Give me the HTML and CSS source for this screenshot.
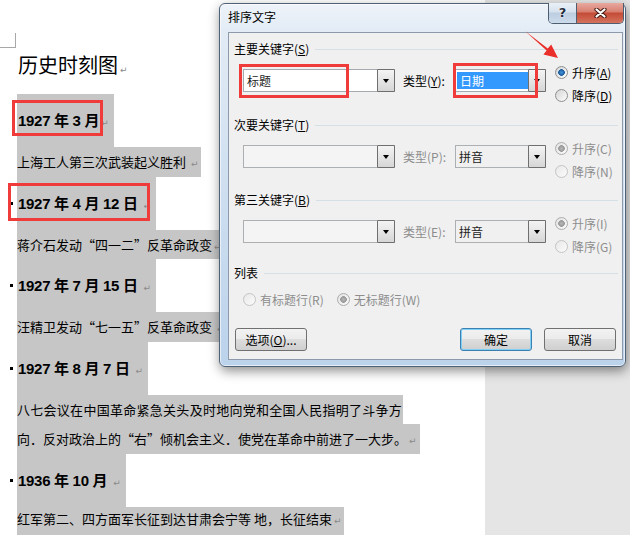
FILE: index.html
```html
<!DOCTYPE html>
<html lang="zh-CN">
<head>
    <meta charset="UTF-8">
    <title>排序文字</title>
    <link rel="stylesheet" href="styles.css">
</head>
<body>
    <div class="doc">
        <div class="crop"></div>
        <h1 class="doc-title">历史时刻图<span class="pm">↵</span></h1>

        <div class="entry"><span class="dot dot-hidden"></span><span class="date">1927 年 3 月<span class="pm">↵</span></span></div>
        <p class="event">上海工人第三次武装起义胜利 <span class="pm">↵</span></p>

        <div class="entry"><span class="dot"></span><span class="date">1927 年 4 月 12 日 <span class="pm">↵</span></span></div>
        <p class="event">蒋介石发动“四一二”反革命政变<span class="pm">↵</span></p>

        <div class="entry"><span class="dot"></span><span class="date">1927 年 7 月 15 日 <span class="pm">↵</span></span></div>
        <p class="event">汪精卫发动“七一五”反革命政变 <span class="pm">↵</span></p>

        <div class="entry"><span class="dot"></span><span class="date">1927 年 8 月 7 日 <span class="pm">↵</span></span></div>
        <div class="event-long">
            <span class="line line-wide">八七会议在中国革命紧急关头及时地向党和全国人民指明了斗争方</span>
            <span class="line">向．反对政治上的“右”倾机会主义．使党在革命中前进了一大步。<span class="pm">↵</span></span>
        </div>

        <div class="entry"><span class="dot"></span><span class="date">1936 年 10 月 <span class="pm">↵</span></span></div>
        <p class="event event-last">红军第二、四方面军长征到达甘肃会宁等 地，长征结束<span class="pm">↵</span></p>
    </div>
    <div class="side"></div>

    <div class="dialog">
        <div class="titlebar">
            <span class="title">排序文字</span>
            <div class="caps">
                <span class="cap-help">?</span>
                <span class="cap-close">
                    <svg width="13" height="10" viewBox="0 0 13 10">
                        <path d="M2.5 1.5 L10.5 8.5 M10.5 1.5 L2.5 8.5" stroke="#4a1c14" stroke-width="4.2" stroke-linecap="round"/>
                        <path d="M2.5 1.5 L10.5 8.5 M10.5 1.5 L2.5 8.5" stroke="#fff" stroke-width="2.2" stroke-linecap="round"/>
                    </svg>
                </span>
            </div>
        </div>

        <div class="client">
            <div class="group">
                <div class="group-head">主要关键字(<u>S</u>)</div>
                <div class="key-row">
                    <div class="key-fields">
                        <div class="combo combo-key"><span class="combo-text">标题</span><span class="drop"><i></i></span></div>
                        <span class="type-label">类型(<u>Y</u>):</span>
                        <div class="combo combo-type"><span class="combo-text picked">日期</span><span class="drop"><i></i></span></div>
                    </div>
                    <div class="sort-order">
                        <label class="radio on"><span class="radio-box"></span>升序(<u>A</u>)</label>
                        <label class="radio"><span class="radio-box"></span>降序(<u>D</u>)</label>
                    </div>
                </div>
            </div>

            <div class="group group-2">
                <div class="group-head">次要关键字(<u>T</u>)</div>
                <div class="key-row">
                    <div class="key-fields">
                        <div class="combo combo-key off"><span class="combo-text"></span><span class="drop"><i></i></span></div>
                        <span class="type-label off">类型(P):</span>
                        <div class="combo combo-type off"><span class="combo-text">拼音</span><span class="drop"><i></i></span></div>
                    </div>
                    <div class="sort-order">
                        <label class="radio off on"><span class="radio-box"></span>升序(C)</label>
                        <label class="radio off"><span class="radio-box"></span>降序(N)</label>
                    </div>
                </div>
            </div>

            <div class="group group-3">
                <div class="group-head">第三关键字(<u>B</u>)</div>
                <div class="key-row">
                    <div class="key-fields">
                        <div class="combo combo-key off"><span class="combo-text"></span><span class="drop"><i></i></span></div>
                        <span class="type-label off">类型(E):</span>
                        <div class="combo combo-type off"><span class="combo-text">拼音</span><span class="drop"><i></i></span></div>
                    </div>
                    <div class="sort-order">
                        <label class="radio off on"><span class="radio-box"></span>升序(I)</label>
                        <label class="radio off"><span class="radio-box"></span>降序(G)</label>
                    </div>
                </div>
            </div>

            <div class="group-head">列表</div>
            <div class="list-row">
                <label class="radio off"><span class="radio-box"></span>有标题行(R)</label>
                <label class="radio off on"><span class="radio-box"></span>无标题行(W)</label>
            </div>

            <div class="btn-row">
                <button class="btn">选项(<u>O</u>)...</button>
                <span class="btn-space"></span>
                <button class="btn btn-default">确定</button>
                <button class="btn">取消</button>
            </div>
        </div>
    </div>

    <div class="hl hl-1"></div>
    <div class="hl hl-2"></div>
    <div class="hl hl-3"></div>
    <div class="hl hl-4"></div>
    <svg class="arrow" width="45" height="36" viewBox="0 0 45 36">
        <polygon points="5,3 27.8,20.6 31.2,16.4 38,30 23.4,26.6 26.6,22.4" fill="#ea2f2b"/>
    </svg>
</body>
</html>
```

FILE: styles.css
```css
body {
    margin: 0;
    width: 630px;
    height: 535px;
    overflow: hidden;
    display: flex;
    position: relative;
    background-color: #fff;
    color: #000;
    font-family: "Noto Sans CJK SC", sans-serif;
}

/* document page */
.doc {
    width: 485px;
    padding: 33px 0 0 10px;
    box-sizing: border-box;
}

.side {
    flex: 1;
    background-color: #e5e5e5;
}

.crop {
    width: 16px;
    height: 15px;
    margin-left: -10px;
    border-right: 1px solid #a8a8a8;
    border-bottom: 1px solid #a8a8a8;
    box-sizing: border-box;
}

.doc-title {
    margin: 2px 0 14px 8px;
    height: 30px;
    font-size: 20px;
    font-weight: normal;
    line-height: 30px;
}

.pm {
    margin-left: 2px;
    font-family: "DejaVu Sans", sans-serif;
    font-size: 9px;
    font-weight: normal;
    line-height: 0;
    color: #8a8a8a;
    letter-spacing: 0;
}

.entry {
    display: flex;
    align-items: center;
    height: 53px;
}

.dot {
    width: 3px;
    height: 3px;
    margin-right: 4px;
    background-color: #000;
}

.dot-hidden {
    visibility: hidden;
}

.date {
    height: 53px;
    padding: 0 5px 0 1px;
    background-color: #c6c6c6;
    font-family: "Liberation Sans", "Noto Sans CJK SC", sans-serif;
    font-size: 15px;
    font-weight: bold;
    line-height: 53px;
    letter-spacing: -0.3px;
}

.event {
    width: fit-content;
    height: 29.5px;
    margin: 0 0 0 7px;
    padding-right: 3px;
    background-color: #c6c6c6;
    font-size: 13px;
    line-height: 29.5px;
    overflow: hidden;
}

.event-last {
    height: 32px;
    line-height: 23px;
}

.event-long {
    margin-left: 7px;
    font-size: 13px;
    line-height: 29.5px;
}

.line {
    display: block;
    width: fit-content;
    height: 29.5px;
    padding-right: 3px;
    background-color: #c6c6c6;
    overflow: hidden;
}

.line-wide {
    padding-right: 1px;
    letter-spacing: 0.28px;
}

/* sort dialog */
.dialog {
    position: absolute;
    left: 219px;
    top: 3px;
    width: 407px;
    height: 364px;
    padding: 0 2px 6px 8px;
    box-sizing: border-box;
    display: flex;
    flex-direction: column;
    border: 1px solid #4f6175;
    border-radius: 6px;
    background: linear-gradient(to bottom, #eef3f9 0, #e2ebf5 28px, #cadcef 60%, #bcd3ec 100%);
    box-shadow: 1px 4px 12px rgba(0, 0, 0, 0.45), inset 0 0 0 1px rgba(255, 255, 255, 0.6);
    font-size: 12px;
}

.titlebar {
    height: 28px;
    display: flex;
    justify-content: space-between;
    align-items: flex-start;
}

.title {
    line-height: 26px;
}

.caps {
    display: flex;
    height: 20px;
    margin: -1px -1px 0 0;
    border: 1px solid #4e5e70;
    border-top: none;
    border-radius: 0 0 5px 5px;
    overflow: hidden;
}

.cap-help {
    width: 27px;
    border-right: 1px solid #4e5e70;
    background: linear-gradient(to bottom, #eaf0f7 0, #d6e1ee 45%, #bccde1 50%, #cddbeb 100%);
    color: #1f2d3d;
    font-family: "DejaVu Sans", sans-serif;
    font-size: 13px;
    font-weight: bold;
    line-height: 19px;
    text-align: center;
    text-shadow: 0 0 2px #fff, 0 0 1px #fff;
}

.cap-close {
    width: 46px;
    display: flex;
    align-items: center;
    justify-content: center;
    background: linear-gradient(to bottom, #e8a99f 0, #d77f6f 45%, #c44b35 50%, #d3735f 100%);
}

.client {
    flex: 1;
    padding: 6px 4px 0 5px;
    border: 1px solid #8d9aab;
    background-color: #f0f0f0;
}

.group {
    height: 76px;
}

.group-2 {
    height: 75px;
}

.group-3 {
    height: 73px;
}

.group-head {
    display: flex;
    align-items: center;
    height: 20px;
    line-height: 20px;
}

.group-head::after {
    content: "";
    flex: 1;
    height: 1px;
    margin-left: 6px;
    background-color: #d5dfe6;
}

.key-row {
    display: flex;
    align-items: flex-start;
    margin-top: 2px;
}

.key-fields {
    display: flex;
    align-items: center;
    margin: 8px 0 0 9px;
}

.combo {
    display: flex;
    height: 23px;
    border: 1px solid #a5a9b0;
    background-color: #fff;
    box-sizing: border-box;
}

.combo.off {
    border-color: #adb0b3;
    background-color: #f4f4f4;
}

.combo-type.off {
    background-color: #f0f0f0;
}

.combo-key {
    width: 152px;
}

.combo-type {
    width: 91px;
}

.combo-text {
    flex: 1;
    padding-left: 3px;
    line-height: 21px;
    color: #222;
}

.combo-text.picked {
    margin: 2px 0 2px 1px;
    padding-left: 3px;
    background-color: #3399ff;
    color: #fff;
    line-height: 17px;
}

.drop {
    width: 16px;
    margin: -1px -1px -1px 0;
    display: flex;
    align-items: center;
    justify-content: center;
    border: 1px solid #6f6f6f;
    border-radius: 1px;
    background: linear-gradient(to bottom, #f4f4f4, #d6d6d6);
}

.drop i {
    width: 0;
    height: 0;
    border-left: 3.5px solid transparent;
    border-right: 3.5px solid transparent;
    border-top: 4px solid #000;
}

.type-label {
    width: 52px;
    margin-left: 8px;
    line-height: 23px;
}

.type-label.off,
.radio.off {
    color: #8d8d8d;
}

.sort-order {
    margin-left: 9px;
}

.radio {
    display: flex;
    align-items: center;
    height: 23px;
}

.radio-box {
    width: 13px;
    height: 13px;
    margin-right: 4px;
    flex: none;
    box-sizing: border-box;
    border: 1px solid #8e8f8f;
    border-radius: 50%;
    background: linear-gradient(135deg, #d4d4d4, #fdfdfd);
}

.radio.on .radio-box {
    background: radial-gradient(circle, #4596dc 0, #1a5a9c 3px, transparent 3.6px), linear-gradient(135deg, #d4d4d4, #fdfdfd);
}

.radio.off .radio-box {
    border-color: #c4c4c4;
    background: linear-gradient(135deg, #e8e8e8, #fbfbfb);
}

.radio.off.on .radio-box {
    border-color: #acacac;
    background: radial-gradient(circle, #b8b8b8 0, #979797 3px, transparent 3.6px), linear-gradient(135deg, #e2e2e2, #fbfbfb);
}

.list-row {
    display: flex;
    gap: 13px;
    height: 20px;
    margin: 6px 0 0 9px;
}

.list-row .radio {
    height: 20px;
}

.btn-row {
    display: flex;
    margin: 19px 2px 0 1px;
}

.btn-space {
    flex: 1;
}

.btn {
    width: 72px;
    height: 23px;
    margin: 0;
    padding: 0;
    border: 1px solid #707070;
    border-radius: 3px;
    background: linear-gradient(to bottom, #f2f2f2 0%, #ebebeb 50%, #dddddd 50%, #cfcfcf 100%);
    font-family: "Noto Sans CJK SC", sans-serif;
    font-size: 12px;
    color: #000;
    line-height: 21px;
}

.btn-default {
    margin-right: 12px;
    border-color: #3c7fb1;
    box-shadow: inset 0 0 0 1px #7fd0f5;
}

/* annotations */
.hl {
    position: absolute;
    border: 3px solid #f03b3b;
    box-sizing: border-box;
}

.hl-1 {
    left: 12px;
    top: 100px;
    width: 91px;
    height: 36px;
}

.hl-2 {
    left: 8px;
    top: 183px;
    width: 142px;
    height: 38px;
}

.hl-3 {
    left: 239px;
    top: 64px;
    width: 110px;
    height: 34px;
}

.hl-4 {
    left: 453px;
    top: 63px;
    width: 85px;
    height: 35px;
}

.arrow {
    position: absolute;
    left: 520px;
    top: 28px;
}
```
